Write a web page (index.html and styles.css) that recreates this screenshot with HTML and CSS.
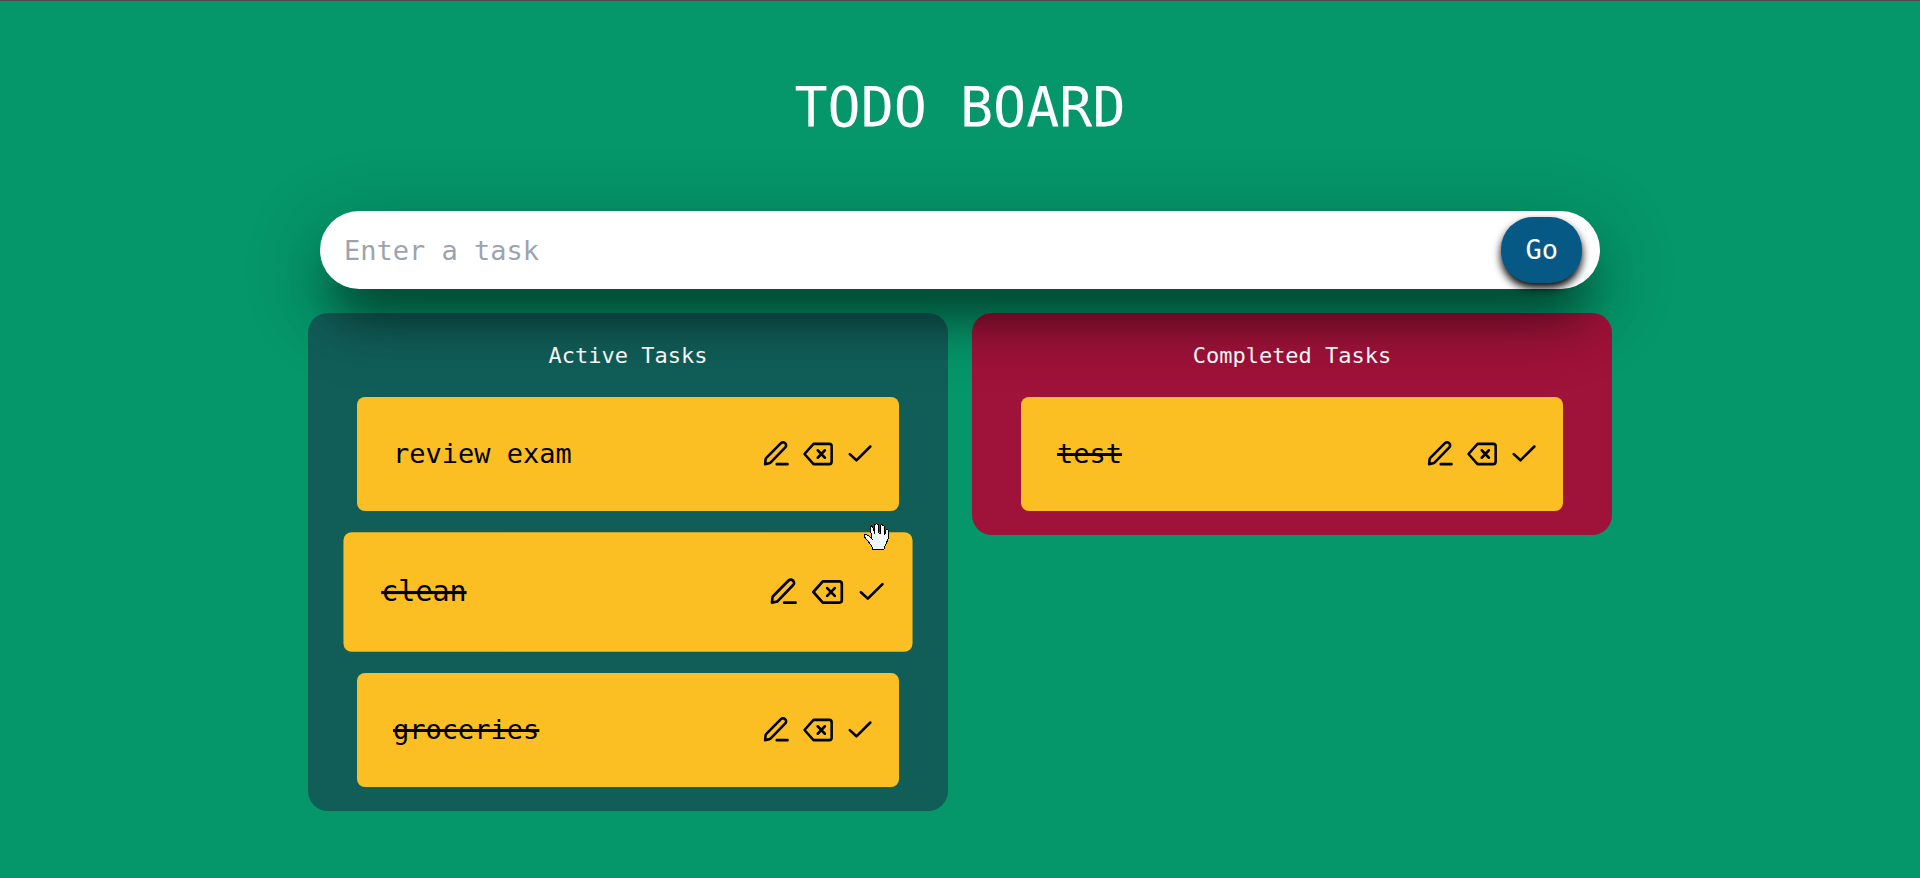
FILE: index.html
```html
<!DOCTYPE html>
<html lang="en">
<head>
<meta charset="utf-8">
<title>Todo Board</title>
<link rel="stylesheet" href="styles.css">
</head>
<body>
<svg width="0" height="0" class="sprite" aria-hidden="true">
  <symbol id="edit" viewBox="0 0 24 24"><path d="M4.750 18.750l.3-3.200a1.800 1.800 0 0 1 .5-1L15.300 4.700a1.900 1.900 0 0 1 2.700 0l.2.2a1.900 1.900 0 0 1 0 2.700L8.500 17.600a1.800 1.800 0 0 1-1 .6zM12.500 18.750h7.200" /></symbol>
  <symbol id="delete" viewBox="0 0 24 24"><path d="M9 5.250h10.500a1.600 1.600 0 0 1 1.600 1.600v10.300a1.600 1.600 0 0 1-1.600 1.600H9L3 12zM11.800 9.500l4.800 5M16.600 9.500l-4.800 5" /></symbol>
  <symbol id="check" viewBox="0 0 24 24"><path d="M5.200 12.100l4.400 4.100L18.900 7" /></symbol>
</svg>
<main class="board">
  <h1 class="title">TODO BOARD</h1>
  <form class="entry">
    <input class="entry-box" type="text" placeholder="Enter a task" aria-label="Enter a task">
    <button class="entry-go" type="submit">Go</button>
  </form>
  <div class="columns">
    <section class="column active">
      <h2 class="column-title">Active Tasks</h2>
      <article class="card">
        <span class="task">review exam</span>
        <button class="action" type="button" aria-label="Edit"><svg class="icon"><use href="#edit"/></svg></button>
        <button class="action" type="button" aria-label="Delete"><svg class="icon"><use href="#delete"/></svg></button>
        <button class="action" type="button" aria-label="Done"><svg class="icon"><use href="#check"/></svg></button>
      </article>
      <article class="card lifted">
        <s class="task">clean</s>
        <button class="action" type="button" aria-label="Edit"><svg class="icon"><use href="#edit"/></svg></button>
        <button class="action" type="button" aria-label="Delete"><svg class="icon"><use href="#delete"/></svg></button>
        <button class="action" type="button" aria-label="Done"><svg class="icon"><use href="#check"/></svg></button>
      </article>
      <article class="card">
        <s class="task">groceries</s>
        <button class="action" type="button" aria-label="Edit"><svg class="icon"><use href="#edit"/></svg></button>
        <button class="action" type="button" aria-label="Delete"><svg class="icon"><use href="#delete"/></svg></button>
        <button class="action" type="button" aria-label="Done"><svg class="icon"><use href="#check"/></svg></button>
      </article>
      <svg class="pointer" viewBox="7 7 27 27" aria-hidden="true">
        <path d="M8 19L10 18.500L13 20L16 23L14.500 14L14 11L15.500 10L17 12L19 18L18.500 9L20.500 7.500L22.500 9L23 17L24 17V10L26 8.500L28 10V18H29L30 14L31.500 13.500L33 15L32 23L30 28L28.500 31L28 33.500H17L15 29L9 21.500Z"/>
      </svg>
    </section>
    <section class="column completed">
      <h2 class="column-title">Completed Tasks</h2>
      <article class="card">
        <s class="task">test</s>
        <button class="action" type="button" aria-label="Edit"><svg class="icon"><use href="#edit"/></svg></button>
        <button class="action" type="button" aria-label="Delete"><svg class="icon"><use href="#delete"/></svg></button>
        <button class="action" type="button" aria-label="Done"><svg class="icon"><use href="#check"/></svg></button>
      </article>
    </section>
  </div>
</main>
</body>
</html>
```
FILE: styles.css
```css
* { box-sizing: border-box; }
body {
  margin: 0;
  min-height: 100vh;
  border-top: 1px solid #4b4b4b;
  background: #059669;
  font-family: Consolas, "DejaVu Sans Mono", monospace;
}
.sprite { position: absolute; }
.board {
  max-width: 1304px;
  margin: 0 auto;
  padding-top: 73px;
}
.title {
  margin: 0 0 71px;
  color: #fff;
  font-size: 55px;
  font-weight: 400;
  line-height: 66px;
  text-align: center;
}
.entry {
  position: relative;
  z-index: 1;
  display: flex;
  align-items: center;
  margin: 0 12px 24px;
  padding: 6px 18px 6px 24px;
  border-radius: 40px;
  background: #fff;
  box-shadow:
    0 20px 80px rgba(0, 0, 0, 0.25),
    0 38px 48px -12px rgba(0, 0, 0, 0.48);
}
.entry-box {
  flex: 1;
  min-width: 0;
  padding: 0;
  border: 0;
  outline: 0;
  background: none;
  font: inherit;
  font-size: 27px;
}
.entry-box::placeholder { color: #9ca3af; opacity: 1; }
.entry-go {
  padding: 0 24px;
  border: 0;
  border-radius: 32px;
  background: #075985;
  box-shadow: 0 5px 8px #000;
  color: #fff;
  font: inherit;
  font-size: 27px;
  line-height: 66px;
}
.columns {
  display: grid;
  grid-template-columns: 1fr 1fr;
  align-items: start;
  gap: 24px;
}
.column {
  position: relative;
  display: flex;
  flex-direction: column;
  gap: 24px;
  padding: 26px 49px 24px;
  border-radius: 20px;
}
.active { background: #115e59; }
.completed { background: #9f1239; }
.column-title {
  margin: 0;
  color: #fff;
  font-size: 22px;
  font-weight: 400;
  line-height: 34px;
  text-align: center;
}
.card {
  display: flex;
  align-items: center;
  gap: 6px;
  padding: 36px 21px 36px 36px;
  border-radius: 8px;
  background: #fbbf24;
  color: #000;
}
.lifted { transform: scale(1.05); }
.task {
  flex: 1;
  font-size: 27px;
  line-height: 42px;
  text-decoration-thickness: 3px;
}
.action {
  display: flex;
  padding: 0;
  border: 0;
  background: none;
  color: inherit;
}
.icon {
  width: 36px;
  height: 36px;
  fill: none;
  stroke: currentColor;
  stroke-width: 1.7;
  stroke-linecap: round;
  stroke-linejoin: round;
}
.pointer {
  position: absolute;
  top: 210px;
  right: 58px;
  width: 27px;
  height: 27px;
  fill: #f0f8ff;
  stroke: #000;
  stroke-width: 1;
  shape-rendering: crispEdges;
}
```
